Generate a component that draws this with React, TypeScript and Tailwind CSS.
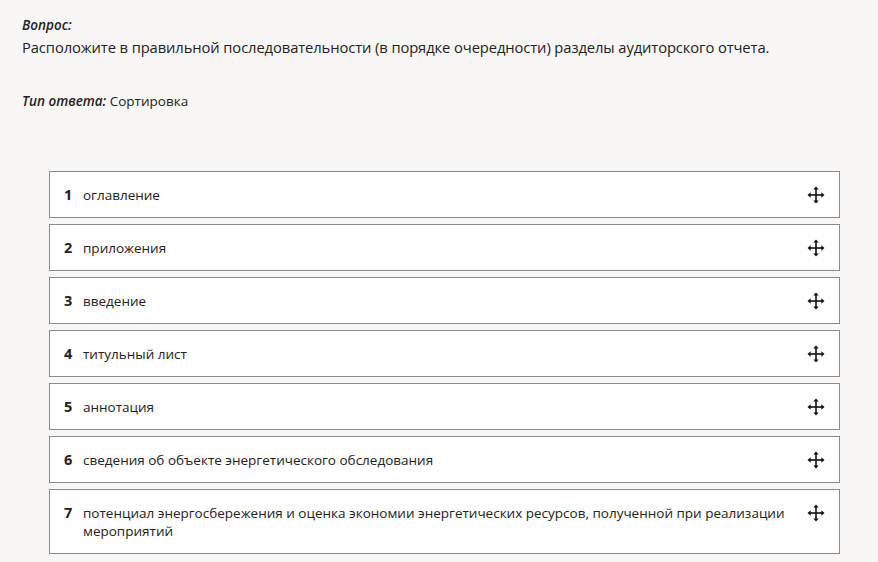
import React from "react";

const items = [
  "оглавление",
  "приложения",
  "введение",
  "титульный лист",
  "аннотация",
  "сведения об объекте энергетического обследования",
  "потенциал энергосбережения и оценка экономии энергетических ресурсов, полученной при реализации мероприятий",
];

function MoveIcon() {
  return (
    <svg width="18" height="18" viewBox="0 0 18 18" fill="#111">
      <rect x="8.2" y="2.5" width="1.6" height="13" />
      <rect x="2.5" y="8.2" width="13" height="1.6" />
      <polygon points="9,0.5 6.3,3.6 11.7,3.6" />
      <polygon points="9,17.5 6.3,14.4 11.7,14.4" />
      <polygon points="0.5,9 3.6,6.3 3.6,11.7" />
      <polygon points="17.5,9 14.4,6.3 14.4,11.7" />
    </svg>
  );
}

export default function App() {
  return (
    <div
      className="w-[878px] h-[562px] overflow-hidden bg-[#f8f7f6] text-[#222]"
      style={{ fontFamily: '"Open Sans", "Noto Sans", sans-serif' }}
    >
      <div className="pl-[22px] pt-[16px]">
        <div className="text-[13.5px] italic font-semibold leading-[18px]">Вопрос:</div>
        <div className="text-[14.75px] leading-[20px] mt-[3px] tracking-[-0.1px]">
          Расположите в правильной последовательности (в порядке очередности) разделы аудиторского отчета.
        </div>
        <div className="mt-[35px] text-[13.5px] leading-[18px]">
          <span className="italic font-semibold">Тип ответа:</span> Сортировка
        </div>
      </div>
      <div className="mt-[61px] ml-[49px] w-[791px] flex flex-col gap-[6px]">
        {items.map((t, i) => (
          <div
            key={i}
            className={`bg-white border border-[#8a8a8a] flex items-start pl-[14px] pr-[13px] ${
              i === 6 ? "min-h-[65px] pt-[14px]" : "h-[47px] pt-[14px]"
            }`}
          >
            <div className="w-[19px] shrink-0 text-[14.5px] font-bold leading-[18px] text-[#222]">{i + 1}</div>
            <div className="flex-1 text-[13.5px] leading-[18px] pr-[12px]">{t}</div>
            <div className="shrink-0 w-[20px] flex justify-center pt-[0px]">
              <MoveIcon />
            </div>
          </div>
        ))}
      </div>
    </div>
  );
}
